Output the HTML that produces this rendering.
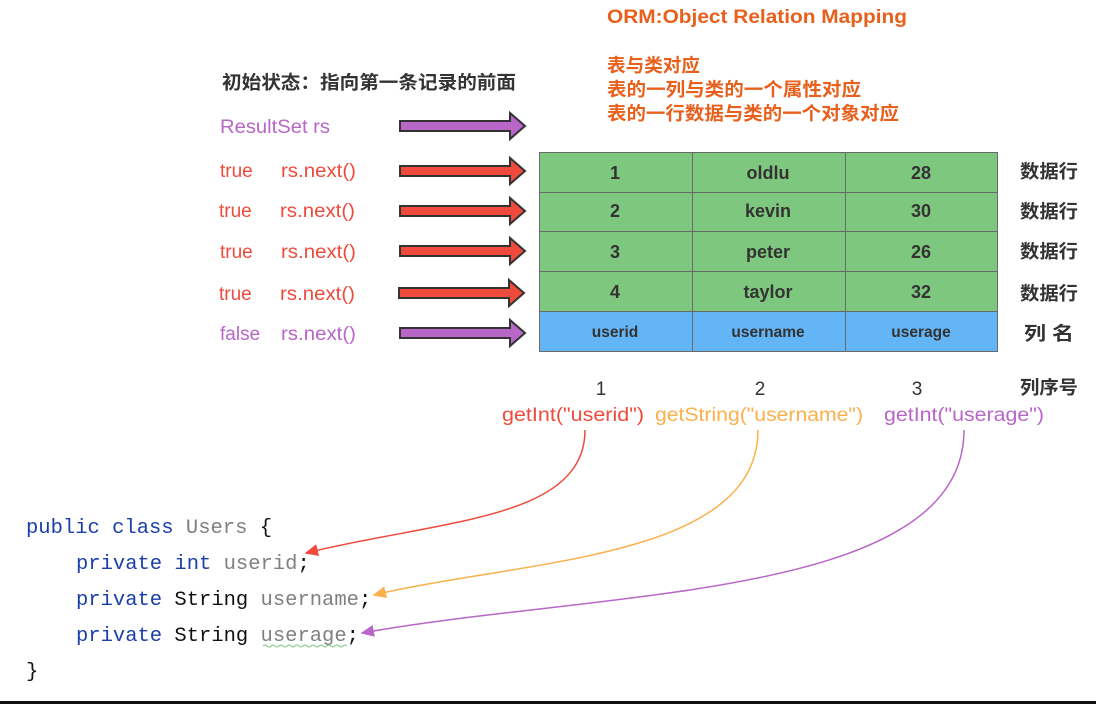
<!DOCTYPE html>
<html><head><meta charset="utf-8"><style>
html,body{margin:0;padding:0;background:#fff;}
svg{display:block}
text{font-family:"Liberation Sans","Noto Sans CJK SC",sans-serif;}
.m{font-family:"Liberation Mono","DejaVu Sans Mono",monospace;font-size:20.5px;font-weight:500;}
</style></head><body>
<svg width="1096" height="704" viewBox="0 0 1096 704" xmlns="http://www.w3.org/2000/svg">
<defs>
<marker id="mr" markerWidth="10" markerHeight="10" refX="8" refY="5" orient="auto"><path d="M0,1 L9,5 L0,9 Z" fill="#ee4b3c"/></marker>
<marker id="mo" markerWidth="10" markerHeight="10" refX="8" refY="5" orient="auto"><path d="M0,1 L9,5 L0,9 Z" fill="#fbb04b"/></marker>
<marker id="mp" markerWidth="10" markerHeight="10" refX="8" refY="5" orient="auto"><path d="M0,1 L9,5 L0,9 Z" fill="#b866c8"/></marker>
<g id="arr"><path d="M0,-5 L110,-5 L110,-13 L125,0 L110,13 L110,5 L0,5 Z" stroke="#333" stroke-width="2"/></g>
</defs>
<text x="607" y="23" font-size="19" font-weight="bold" fill="#e8601c" textLength="300" lengthAdjust="spacingAndGlyphs">ORM:Object Relation Mapping</text>
<text x="607" y="72" font-size="18.5" font-weight="bold" fill="#e8601c" textLength="93" lengthAdjust="spacingAndGlyphs">表与类对应</text>
<text x="607" y="96" font-size="18.5" font-weight="bold" fill="#e8601c" textLength="254" lengthAdjust="spacingAndGlyphs">表的一列与类的一个属性对应</text>
<text x="607" y="120" font-size="18.5" font-weight="bold" fill="#e8601c" textLength="292" lengthAdjust="spacingAndGlyphs">表的一行数据与类的一个对象对应</text>
<text x="222" y="89" font-size="18.5" font-weight="bold" fill="#333" textLength="294" lengthAdjust="spacingAndGlyphs">初始状态：指向第一条记录的前面</text>

<text x="220" y="133" font-size="19" fill="#b866c8" textLength="110" lengthAdjust="spacingAndGlyphs">ResultSet rs</text>
<g font-size="19" fill="#ee4b3c">
<text x="220" y="177">true</text><text x="281" y="177" textLength="75" lengthAdjust="spacingAndGlyphs">rs.next()</text>
<text x="219" y="217">true</text><text x="280" y="217" textLength="75" lengthAdjust="spacingAndGlyphs">rs.next()</text>
<text x="220" y="258">true</text><text x="281" y="258" textLength="75" lengthAdjust="spacingAndGlyphs">rs.next()</text>
<text x="219" y="300">true</text><text x="280" y="300" textLength="75" lengthAdjust="spacingAndGlyphs">rs.next()</text>
</g>
<text x="220" y="340" font-size="19" fill="#b866c8">false</text><text x="281" y="340" font-size="19" fill="#b866c8" textLength="75" lengthAdjust="spacingAndGlyphs">rs.next()</text>

<use href="#arr" x="400" y="126" fill="#b866c8"/>
<use href="#arr" x="400" y="171" fill="#ee4b3c"/>
<use href="#arr" x="400" y="211" fill="#ee4b3c"/>
<use href="#arr" x="400" y="251" fill="#ee4b3c"/>
<use href="#arr" x="399" y="293" fill="#ee4b3c"/>
<use href="#arr" x="400" y="333" fill="#b866c8"/>

<g stroke="#6a6a6a" stroke-width="1">
<rect x="539.5" y="152.5" width="458" height="159" fill="#7ec77e"/>
<rect x="539.5" y="311.5" width="458" height="40" fill="#64b5f6"/>
<line x1="539" y1="192.5" x2="998" y2="192.5"/><line x1="539" y1="231.5" x2="998" y2="231.5"/><line x1="539" y1="271.5" x2="998" y2="271.5"/>
<line x1="692.5" y1="152" x2="692.5" y2="352"/><line x1="845.5" y1="152" x2="845.5" y2="352"/>
</g>
<g font-size="18" font-weight="bold" fill="#333" text-anchor="middle">
<text x="615" y="179">1</text><text x="768" y="179">oldlu</text><text x="921" y="179">28</text>
<text x="615" y="217">2</text><text x="768" y="217">kevin</text><text x="921" y="217">30</text>
<text x="615" y="258">3</text><text x="768" y="258">peter</text><text x="921" y="258">26</text>
<text x="615" y="298">4</text><text x="768" y="298">taylor</text><text x="921" y="298">32</text>
<text x="615" y="337" font-size="15.5">userid</text><text x="768" y="337" font-size="15.5">username</text><text x="921" y="337" font-size="15.5">userage</text>
</g>
<g font-size="18.5" font-weight="bold" fill="#333">
<text x="1020" y="178" textLength="58" lengthAdjust="spacingAndGlyphs">数据行</text><text x="1020" y="218" textLength="58" lengthAdjust="spacingAndGlyphs">数据行</text><text x="1020" y="258" textLength="58" lengthAdjust="spacingAndGlyphs">数据行</text><text x="1020" y="300" textLength="58" lengthAdjust="spacingAndGlyphs">数据行</text>
<text x="1024" y="340" textLength="50" lengthAdjust="spacingAndGlyphs">列  名</text><text x="1020" y="394" textLength="58" lengthAdjust="spacingAndGlyphs">列序号</text>
</g>
<g font-size="19" fill="#333" text-anchor="middle"><text x="601" y="395">1</text><text x="760" y="395">2</text><text x="917" y="395">3</text></g>
<text x="502" y="421" font-size="19" fill="#ee4b3c" textLength="142" lengthAdjust="spacingAndGlyphs">getInt("userid")</text>
<text x="655" y="421" font-size="19" fill="#fbb04b" textLength="208" lengthAdjust="spacingAndGlyphs">getString("username")</text>
<text x="884" y="421" font-size="19" fill="#b866c8" textLength="160" lengthAdjust="spacingAndGlyphs">getInt("userage")</text>

<path d="M585,430 C585,520 440,520 306,553" fill="none" stroke="#ee4b3c" stroke-width="1.5" marker-end="url(#mr)"/>
<path d="M758,430 C758,560 520,560 374,595" fill="none" stroke="#fbb04b" stroke-width="1.5" marker-end="url(#mo)"/>
<path d="M964,430 C964,600 600,590 362,633" fill="none" stroke="#b866c8" stroke-width="1.5" marker-end="url(#mp)"/>

<text class="m" x="26" y="533" textLength="246" lengthAdjust="spacingAndGlyphs"><tspan fill="#1a3fa8">public class </tspan><tspan fill="#808080">Users </tspan><tspan fill="#111">{</tspan></text>
<text class="m" x="76" y="569"><tspan fill="#1a3fa8">private int </tspan><tspan fill="#808080">userid</tspan><tspan fill="#111">;</tspan></text>
<text class="m" x="76" y="605"><tspan fill="#1a3fa8">private </tspan><tspan fill="#111">String </tspan><tspan fill="#808080">username</tspan><tspan fill="#111">;</tspan></text>
<text class="m" x="76" y="641"><tspan fill="#1a3fa8">private </tspan><tspan fill="#111">String </tspan><tspan fill="#808080">userage</tspan><tspan fill="#111">;</tspan></text>
<path d="M263,646 q2,-2 4,0 t4,0 t4,0 t4,0 t4,0 t4,0 t4,0 t4,0 t4,0 t4,0 t4,0 t4,0 t4,0 t4,0 t4,0 t4,0 t4,0 t4,0 t4,0 t4,0 t4,0" fill="none" stroke="#7fc77f" stroke-width="1"/>
<text class="m" x="26" y="677" fill="#111">}</text>
<rect x="0" y="701" width="1096" height="3" fill="#111"/>
</svg>
</body></html>
